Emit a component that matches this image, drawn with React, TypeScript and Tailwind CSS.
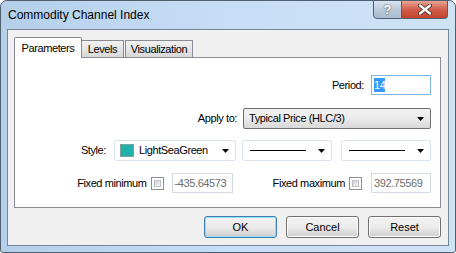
import React from "react";

const font = { fontFamily: '"Liberation Sans", Arial, sans-serif' };

function Combo({ width, children, flat }: { width: string; children: React.ReactNode; flat?: boolean }) {
  return (
    <div
      className={
        "h-[21px] flex items-center pl-[5px] pr-[6px] rounded-[2px] border " +
        width +
        (flat
          ? " bg-white border-[#dbe3ec]"
          : " border-[#707070] bg-gradient-to-b from-[#f2f2f2] via-[#ebebeb] to-[#d8d8d8]")
      }
    >
      <div className="flex-1 min-w-0 flex items-center whitespace-nowrap">{children}</div>
      <svg width="7" height="4" viewBox="0 0 7 4" className="shrink-0">
        <path d="M0 0h7L3.5 4z" fill="#000" />
      </svg>
    </div>
  );
}

function Check() {
  return (
    <div className="w-[13px] h-[13px] border border-[#8f8f8f] bg-white p-[2px]">
      <div className="w-full h-full bg-gradient-to-br from-[#cbcfd5] to-[#f6f6f6] border border-[#c0c4ca]" />
    </div>
  );
}

function Btn({ label, def }: { label: string; def?: boolean }) {
  return (
    <div
      className={
        "w-[73px] h-[22px] rounded-[3px] border flex items-center justify-center text-black bg-gradient-to-b from-[#f2f2f2] via-[#ebebeb] to-[#cfcfcf] " +
        (def ? "border-[#3c7fb1] shadow-[inset_0_0_0_1px_#8ee0fb]" : "border-[#707070] shadow-[inset_0_0_0_1px_#fcfcfc]")
      }
    >
      {label}
    </div>
  );
}

export default function App() {
  return (
    <div
      style={font}
      className="w-[456px] h-[253px] flex flex-col border border-[#4f5f72] rounded-t-[7px] rounded-b-[3px] bg-gradient-to-r from-[#b6cfe9] via-[#c6def6] to-[#cfe3f7] overflow-hidden text-black"
    >
      {/* title bar */}
      <div className="h-[28px] flex items-start shrink-0">
        <div className="flex-1 pl-[7px] pt-[7px] text-[12px] leading-[15px] text-black">Commodity Channel Index</div>
        <div className="flex h-[19px] mr-[7px] -mt-[1px]">
          <div className="w-[29px] h-full border border-[#4f5f72] rounded-bl-[4px] bg-gradient-to-b from-[#d9e4f0] via-[#bccbdb] to-[#a9bbd0] flex items-center justify-center text-white font-bold text-[13px] leading-none [text-shadow:0_0_2px_#333]">
            ?
          </div>
          <div className="w-[46px] h-full border border-l-0 border-[#4f5f72] rounded-br-[4px] bg-gradient-to-b from-[#e8a493] via-[#d25e4a] to-[#c2452f] flex items-center justify-center">
            <svg width="14" height="11" viewBox="0 0 14 11">
              <path d="M2 1.5l10 8M12 1.5l-10 8" stroke="#3b2a28" strokeWidth="4" strokeLinecap="round" />
              <path d="M2 1.5l10 8M12 1.5l-10 8" stroke="#fff" strokeWidth="2.4" strokeLinecap="round" />
            </svg>
          </div>
        </div>
      </div>

      {/* client area */}
      <div className="mx-[6px] h-[217px] border border-[#75869a] bg-[#f0f0f0] flex flex-col pt-[7px] pl-[6px] pr-[7px] text-[11px] tracking-[-0.4px]">
        {/* tabs */}
        <div className="flex items-end h-[20px] relative z-10">
          <div className="w-[68px] h-[21px] -mb-[1px] pt-[2px] text-center border border-b-0 border-[#898c95] bg-white leading-[16px] rounded-t-[2px]">
            Parameters
          </div>
          <div className="w-[42px] h-[17px] text-center border border-l-0 border-b-0 border-[#898c95] bg-gradient-to-b from-[#f2f2f2] to-[#d8d8d8] leading-[16px]">
            Levels
          </div>
          <div className="w-[68px] h-[17px] ml-[1px] text-center border border-b-0 border-[#898c95] bg-gradient-to-b from-[#f2f2f2] to-[#d8d8d8] leading-[16px]">
            Visualization
          </div>
        </div>

        {/* panel */}
        <div className="h-[151px] border border-[#898c95] bg-white flex flex-col items-end pr-[9px]">
          <div className="mt-[17px] flex items-center h-[20px]">
            <span className="mr-[7px]">Period:</span>
            <div className="w-[60px] h-[20px] border border-[#7eb4ea] bg-white flex items-center pl-[2px]">
              <span className="bg-[#3399ff] text-white leading-[14px]">14</span>
            </div>
          </div>

          <div className="mt-[13px] flex items-center">
            <span className="mr-[6px]">Apply to:</span>
            <Combo width="w-[188px]">Typical Price (HLC/3)</Combo>
          </div>

          <div className="mt-[11px] flex items-center">
            <span className="mr-[8px]">Style:</span>
            <Combo width="w-[122px]" flat>
              <div className="w-[14px] h-[13px] bg-[#20b2aa] border border-[#7f9f9c] mr-[5px]" />
              LightSeaGreen
            </Combo>
            <div className="w-[6px]" />
            <Combo width="w-[90px]" flat>
              <div className="w-[56px] h-px bg-black ml-[2px]" />
            </Combo>
            <div className="w-[9px]" />
            <Combo width="w-[90px]" flat>
              <div className="w-[56px] h-px bg-black ml-[2px]" />
            </Combo>
          </div>

          <div className="mt-[12px] flex items-center h-[20px]">
            <span className="mr-[4px]">Fixed minimum</span>
            <Check />
            <div className="ml-[8px] w-[61px] h-[20px] border border-[#d5dbe2] flex items-center pl-[2px] text-[#6d6d6d]">
              -435.64573
            </div>
            <span className="ml-[40px] mr-[4px]">Fixed maximum</span>
            <Check />
            <div className="ml-[9px] w-[60px] h-[20px] border border-[#d5dbe2] flex items-center pl-[2px] text-[#6d6d6d]">
              392.75569
            </div>
          </div>
        </div>

        {/* buttons */}
        <div className="mt-[8px] flex justify-end gap-[9px] text-[11px] tracking-normal">
          <Btn label="OK" def />
          <Btn label="Cancel" />
          <Btn label="Reset" />
        </div>
      </div>
    </div>
  );
}
